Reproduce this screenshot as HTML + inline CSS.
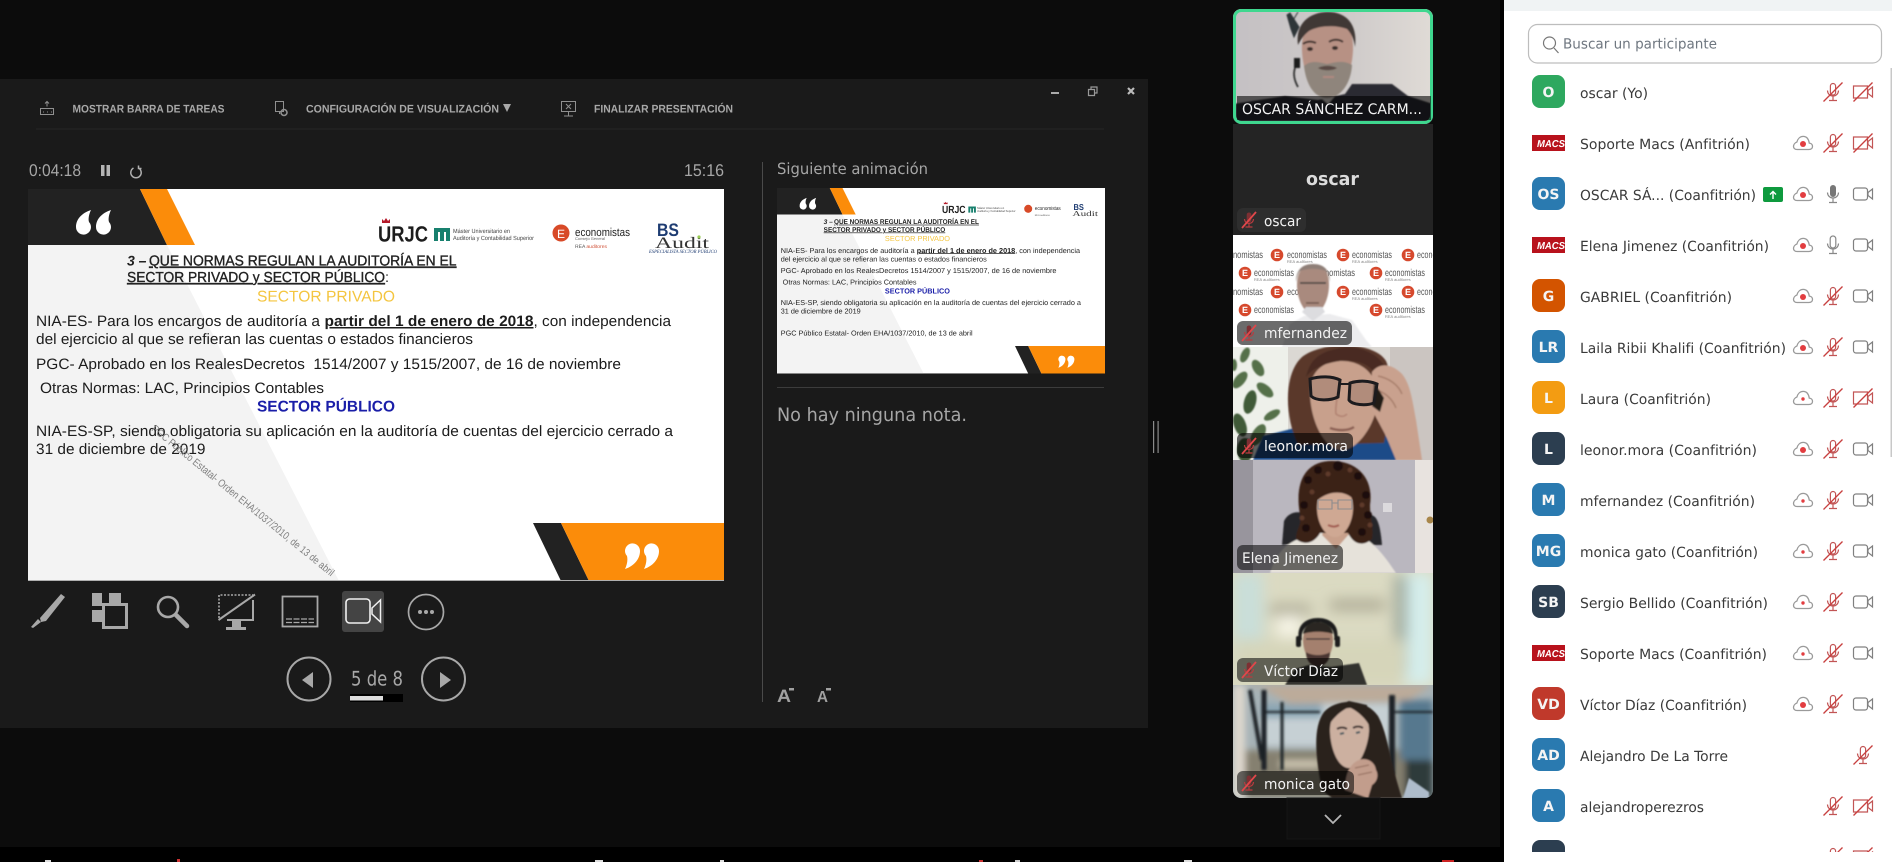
<!DOCTYPE html>
<html lang="es"><head><meta charset="utf-8"><title>Presentación</title>
<style>
html,body{margin:0;padding:0;background:#0c0c0c;width:1892px;height:862px;overflow:hidden}
svg{display:block}
text{font-family:"Liberation Sans",Arial,sans-serif;text-rendering:geometricPrecision}
.d{font-family:"DejaVu Sans","Liberation Sans",sans-serif}
.s{font-size:15px;fill:#1c1c1c}
.n{font-family:"DejaVu Sans","Liberation Sans",sans-serif;font-size:14px;fill:#3a3a3a}
.l{font-family:"DejaVu Sans","Liberation Sans",sans-serif;font-size:14.5px;fill:#f2f2f2}
.av{font-family:"DejaVu Sans","Liberation Sans",sans-serif;font-weight:bold;font-size:14px;fill:#f4f4f4;text-anchor:middle}
.t{font-weight:bold;font-size:11px;fill:#a8a8a8}
.e{font-size:10px;fill:#555}
.w{font-size:9px;fill:#fff;text-anchor:middle;font-weight:bold}
</style></head><body>
<svg width="1892" height="862" viewBox="0 0 1892 862" xmlns="http://www.w3.org/2000/svg">
<defs>
<filter id="b0" x="-20%" y="-20%" width="140%" height="140%"><feGaussianBlur stdDeviation=".7"/></filter>
<filter id="b1" x="-20%" y="-20%" width="140%" height="140%"><feGaussianBlur stdDeviation="1.4"/></filter>
<filter id="b3" x="-30%" y="-30%" width="160%" height="160%"><feGaussianBlur stdDeviation="3.5"/></filter>
<filter id="b7" x="-30%" y="-30%" width="160%" height="160%"><feGaussianBlur stdDeviation="7"/></filter>
<linearGradient id="g1" x1="0" x2="1" y1="0" y2="0"><stop offset="0" stop-color="#c4c0c3"/><stop offset=".6" stop-color="#cfcbca"/><stop offset="1" stop-color="#e0dbd6"/></linearGradient>
<clipPath id="c1"><rect x="1233" y="9" width="200" height="115" rx="8"/></clipPath>
<clipPath id="c3"><rect x="1233" y="235" width="200" height="112"/></clipPath>
<clipPath id="c4"><rect x="1233" y="347" width="200" height="113"/></clipPath>
<clipPath id="c5"><rect x="1233" y="460" width="200" height="113"/></clipPath>
<clipPath id="c6"><rect x="1233" y="573" width="200" height="112"/></clipPath>
<clipPath id="c7"><path d="M1233 685H1433V790a8 8 0 0 1-8 8H1241a8 8 0 0 1-8-8Z"/></clipPath>
<clipPath id="cp"><rect x="1504" y="0" width="388" height="852"/></clipPath>
<clipPath id="cs"><rect x="28" y="189" width="696" height="392"/></clipPath>
<g id="mic"><g fill="none" stroke="#c25555" stroke-width="1.2"><rect x="-2.6" y="-8.5" width="5.2" height="11.5" rx="2.6"/><path d="M-5.5-1.5a5.5 5.5 0 0 0 11 0M0 4v4.5M-4 8.5h8"/></g><path d="M-9.5 9.5L9.5-9.5" stroke="#c8403f" stroke-width="1.3"/></g>
<g id="micg"><g fill="none" stroke="#888" stroke-width="1.2"><path d="M-5.5-1.5a5.5 5.5 0 0 0 11 0M0 4v4.5M-4 8.5h8"/></g><rect x="-3" y="-9" width="6" height="12" rx="3" fill="#777"/></g>
<g id="mico" fill="none" stroke="#888" stroke-width="1.2"><rect x="-2.8" y="-9" width="5.6" height="12" rx="2.8"/><path d="M-5.5-1.5a5.5 5.5 0 0 0 11 0M0 4v4.5M-4 8.5h8"/></g>
<g id="cam" fill="none" stroke="#808080" stroke-width="1.2"><rect x="-9.5" y="-6" width="14" height="12" rx="2.5"/><path d="M5-1.5L9.5-5V5L5 1.5Z"/></g>
<g id="camx" fill="none" stroke="#c25555" stroke-width="1.2"><path d="M-7-6H4.5V6H-9.5V-6Z"/><path d="M5-1.5L9.5-5V5L5 1.5Z"/><path d="M-9.5 9.5L9.5-9.5" stroke="#c8403f" stroke-width="1.3"/></g>
<g id="cl"><path d="M-6 6.5H6c2.4 0 3.5-1.5 3.5-3.1 0-1.9-1.4-3.2-3.2-3.3C5.5-4.5 3.2-6.6.2-6.6c-3 0-5.4 2.2-6.3 5.6C-8.1-.2-9.5 1.7-9.5 3.4-9.5 5-8.3 6.5-6 6.5Z" fill="#fff" stroke="#9a9a9a" stroke-width="1.3"/></g>
<g id="mut"><rect x="-2.3" y="-7.5" width="4.6" height="10" rx="2.3" fill="#7d2f33"/><path d="M-4.5-1a4.5 4.5 0 0 0 9 0M0 3.5v3.5M-3.5 7h7" fill="none" stroke="#b83b3f" stroke-width="1.2"/><path d="M-7 8L7-8" stroke="#e0474a" stroke-width="1.8"/></g>
</defs>

<rect width="1892" height="862" fill="#0c0c0c"/>
<rect y="847" width="1504" height="15" fill="#000"/>
<rect x="1500" width="4" height="862" fill="#000"/>
<g><rect x="45" y="860" width="6" height="2" fill="#ddd"/><rect x="177" y="859" width="3" height="3" fill="#c33"/><rect x="595" y="860" width="8" height="2" fill="#ddd"/><rect x="720" y="860" width="4" height="2" fill="#ddd"/><rect x="979" y="860" width="4" height="2" fill="#c33"/><rect x="1015" y="860" width="5" height="2" fill="#ccc"/><rect x="1184" y="860" width="8" height="2" fill="#ddd"/><rect x="1442" y="860" width="12" height="2" fill="#c22"/></g>

<rect x="0" y="79" width="1148" height="649" fill="#1a1a1a"/>
<rect x="36" y="128.5" width="1068" height="1" fill="#272727"/>

<g stroke="#909090" fill="none" stroke-width="1">
<path d="M40.5 108.5h13v6h-13zM47 101.5v5M45 103.5l2-2 2 2"/>
<path d="M43 112h1M47 112h1M51 112h1"/>
<path d="M275.5 101.5h8v10h-8zM279.5 111v3"/><circle cx="284" cy="112.5" r="3" stroke-width="1.6"/>
<path d="M561.5 101.5h14v10h-14zM568.5 111.5v4M564 116h9M566 104l5 5M571 104l-5 5"/>
</g>
<text class="t" x="72.5" y="112.5" textLength="152" lengthAdjust="spacingAndGlyphs">MOSTRAR BARRA DE TAREAS</text>
<text class="t" x="306" y="112.5" textLength="193" lengthAdjust="spacingAndGlyphs">CONFIGURACIÓN DE VISUALIZACIÓN</text>
<path d="M503 104h8l-4 8Z" fill="#a8a8a8"/>
<text class="t" x="594" y="112.5" textLength="139" lengthAdjust="spacingAndGlyphs">FINALIZAR PRESENTACIÓN</text>

<rect x="1051" y="92" width="8" height="2" fill="#aaa"/>
<path d="M1088.5 89.5h6v6h-6zM1091 89v-2h6v6h-2" fill="none" stroke="#999" stroke-width="1.2"/>
<path d="M1128 88l6 6M1134 88l-6 6" stroke="#bbb" stroke-width="2.2"/>

<text x="29" y="176" font-size="17" fill="#a6a6a6" textLength="52" lengthAdjust="spacingAndGlyphs">0:04:18</text>
<rect x="101" y="165" width="3.5" height="11" fill="#b5b5b5"/><rect x="106.5" y="165" width="3.5" height="11" fill="#b5b5b5"/>
<path d="M133.5 168a5.2 5.2 0 1 0 5 0M138.5 165.5v3h3" fill="none" stroke="#b0b0b0" stroke-width="1.5"/>
<text x="684" y="176" font-size="17" fill="#a6a6a6" textLength="40" lengthAdjust="spacingAndGlyphs">15:16</text>

<!-- main slide -->
<g clip-path="url(#cs)">
<rect x="28" y="189" width="696" height="392" fill="#fff"/>
<path d="M28 245H167L339 581H28Z" fill="#f3f3f3"/>
<path d="M28 189H140L167 245H28Z" fill="#222"/>
<path d="M140 189H167L195 245H167Z" fill="#fb8c0a"/>
<path d="M533 523H561L589 581H561Z" fill="#222"/>
<path d="M561 523H724V581H589Z" fill="#fb8c0a"/>
<path d="M91 210C82 213 76 219 76 227a7.5 7.5 0 1 0 13-5c-1-3 0-8 2-12ZM111 210C102 213 96 219 96 227a7.5 7.5 0 1 0 13-5c-1-3 0-8 2-12Z" fill="#fff"/>
<path d="M625 569C634 566 640 559 640 551a7.5 7.5 0 1 0-13 5c1 4 0 9-2 13ZM644 569C653 566 659 559 659 551a7.5 7.5 0 1 0-13 5c1 4 0 9-2 13Z" fill="#fff"/>

<path d="M382 223v-4l2 2 2-3 2 3 2-2v4Z" fill="#b51a2a"/>
<text x="378" y="241.5" font-size="22" font-weight="bold" fill="#1d1d1d" textLength="50" lengthAdjust="spacingAndGlyphs">URJC</text>
<path d="M434 228h16v13h-4v-9h-2v9h-4v-9h-2v9h-4Z" fill="#18806e"/>
<text x="453" y="233" font-size="6" fill="#444" textLength="57" lengthAdjust="spacingAndGlyphs">Máster Universitario en</text>
<text x="453" y="240" font-size="6" fill="#444" textLength="81" lengthAdjust="spacingAndGlyphs">Auditoría y Contabilidad Superior</text>
<circle cx="561" cy="233" r="8.5" fill="#d84a28"/>
<text x="561" y="238" font-size="12" fill="#fff" text-anchor="middle">E</text>
<text x="575" y="236" font-size="11.5" fill="#222" textLength="55" lengthAdjust="spacingAndGlyphs">economistas</text>
<text x="575" y="240" font-size="4" fill="#666" textLength="30" lengthAdjust="spacingAndGlyphs">Consejo General</text>
<text x="575" y="248" font-size="5" fill="#555">REA <tspan fill="#d0533a">auditores</tspan></text>
<text x="657" y="236" font-size="18" font-weight="bold" fill="#1e3c72" textLength="22" lengthAdjust="spacingAndGlyphs">BS</text>
<text x="655" y="248" font-size="16" fill="#333" style="font-family:'Liberation Serif',serif" textLength="54" lengthAdjust="spacingAndGlyphs">Audit</text>
<circle cx="699" cy="237" r="1.6" fill="#9c5"/>
<text x="649" y="253" font-size="5" font-style="italic" fill="#1e3c72" style="font-family:'Liberation Serif',serif" textLength="68" lengthAdjust="spacingAndGlyphs">ESPECIALISTA SECTOR PÚBLICO</text>

<text x="127" y="265.5" font-size="14" font-weight="bold" font-style="italic" fill="#222">3 –</text>
<text x="149" y="265.5" font-size="14.5" fill="#222" text-decoration="underline" textLength="307.5" lengthAdjust="spacingAndGlyphs" style="stroke:#222;stroke-width:.35">QUE NORMAS REGULAN LA AUDITORÍA EN EL</text>
<text x="127" y="282" font-size="14.5" fill="#222" text-decoration="underline" textLength="258" lengthAdjust="spacingAndGlyphs" style="stroke:#222;stroke-width:.35">SECTOR PRIVADO y SECTOR PÚBLICO</text>
<text x="385" y="282" font-size="14.5" fill="#222">:</text>
<text x="257" y="301.5" font-size="15.5" fill="#f4c53f" textLength="138" lengthAdjust="spacingAndGlyphs">SECTOR PRIVADO</text>
<text class="s" x="36" y="326" textLength="284" lengthAdjust="spacingAndGlyphs">NIA-ES- Para los encargos de auditoría a</text>
<text class="s" x="324.5" y="326" font-weight="bold" text-decoration="underline" textLength="209" lengthAdjust="spacingAndGlyphs">partir del 1 de enero de 2018</text>
<text class="s" x="533.5" y="326" textLength="137.5" lengthAdjust="spacingAndGlyphs">, con independencia</text>
<text class="s" x="36" y="344" textLength="437" lengthAdjust="spacingAndGlyphs">del ejercicio al que se refieran las cuentas o estados financieros</text>
<text class="s" x="36" y="369" textLength="585" lengthAdjust="spacingAndGlyphs" xml:space="preserve">PGC- Aprobado en los RealesDecretos  1514/2007 y 1515/2007, de 16 de noviembre</text>
<text class="s" x="40" y="393" textLength="284" lengthAdjust="spacingAndGlyphs">Otras Normas: LAC, Principios Contables</text>
<text x="257" y="411.5" font-size="15.5" font-weight="bold" fill="#1a1ea8" textLength="138" lengthAdjust="spacingAndGlyphs">SECTOR PÚBLICO</text>
<text class="s" x="36" y="436" textLength="637" lengthAdjust="spacingAndGlyphs">NIA-ES-SP, siendo obligatoria su aplicación en la auditoría de cuentas del ejercicio cerrado a</text>
<text class="s" x="36" y="454" textLength="169.5" lengthAdjust="spacingAndGlyphs">31 de diciembre de 2019</text>
<text transform="translate(151,430) rotate(39.2)" font-size="10.5" fill="#808080" textLength="232" lengthAdjust="spacingAndGlyphs">PGC Público Estatal- Orden EHA/1037/2010, de 13 de abril</text>
</g>
<rect x="28" y="580" width="696" height="1" fill="#b0b0b0"/>

<!-- bottom tool icons -->
<g fill="#a8a8a8" stroke="none">
<path d="M61 594l4 3-19 24-5 1-1-4Z"/><path d="M38 619l3 3-8 6-2-1Z"/>
<rect x="92" y="593" width="10" height="13"/><rect x="109" y="593" width="12" height="10"/><rect x="92" y="610" width="10" height="12"/>
</g>
<rect x="103.5" y="604.5" width="23" height="23" fill="none" stroke="#a8a8a8" stroke-width="3"/>
<circle cx="168" cy="607" r="10" fill="none" stroke="#a8a8a8" stroke-width="2.6"/>
<path d="M176 615l11 11" stroke="#a8a8a8" stroke-width="4.5" stroke-linecap="round"/>
<path d="M219 618v-23h34" fill="none" stroke="#a8a8a8" stroke-width="1.6" stroke-dasharray="2 1.5"/>
<path d="M218.5 620L255 594.5M253 600v20h-26" fill="none" stroke="#a8a8a8" stroke-width="2"/>
<rect x="232" y="620" width="9" height="7" fill="#a8a8a8"/>
<rect x="226" y="627" width="20" height="3" fill="#a8a8a8"/>
<rect x="282.5" y="596.5" width="35" height="30" fill="none" stroke="#a8a8a8" stroke-width="1.8"/>
<path d="M286 619h28M286 622.5h28" stroke="#a8a8a8" stroke-width="1.2" stroke-dasharray="6 1.5"/>
<rect x="342" y="591" width="42" height="41" rx="3" fill="#444"/>
<rect x="346" y="599" width="24" height="24" rx="3.5" fill="#444" stroke="#f0f0f0" stroke-width="1.6"/>
<path d="M372 608L380.5 600V622L372 614Z" fill="#444" stroke="#f0f0f0" stroke-width="1.5"/>
<circle cx="426" cy="612" r="17.5" fill="none" stroke="#a8a8a8" stroke-width="1.7"/>
<circle cx="420" cy="612" r="2" fill="#a8a8a8"/><circle cx="426" cy="612" r="2" fill="#a8a8a8"/><circle cx="432" cy="612" r="2" fill="#a8a8a8"/>
<circle cx="309" cy="679" r="21.5" fill="none" stroke="#a8a8a8" stroke-width="2"/>
<path d="M302 680l11-8v16Z" fill="#a8a8a8"/>
<circle cx="443.5" cy="679" r="21.5" fill="none" stroke="#a8a8a8" stroke-width="2"/>
<path d="M451 680l-11-8v16Z" fill="#a8a8a8"/>
<text x="351" y="685.5" font-size="20" fill="#a8a8a8" class="d" textLength="52" lengthAdjust="spacingAndGlyphs">5 de 8</text>
<rect x="350" y="694" width="53" height="8" fill="#000"/><rect x="350" y="696" width="33" height="4.5" fill="#ddd"/>

<rect x="762" y="162" width="1" height="540" fill="#4a4a4a"/>
<text class="d" x="777" y="174" font-size="15.5" fill="#a6a6a6" textLength="151" lengthAdjust="spacingAndGlyphs">Siguiente animación</text>

<!-- next slide thumbnail -->
<g transform="translate(777,188) scale(.4713,.4731) translate(-28,-189)">
<g clip-path="url(#cs)">
<rect x="28" y="189" width="696" height="392" fill="#fff"/>
<path d="M28 245H167L339 581H28Z" fill="#f3f3f3"/>
<path d="M28 189H140L167 245H28Z" fill="#222"/>
<path d="M140 189H167L195 245H167Z" fill="#fb8c0a"/>
<path d="M533 523H561L589 581H561Z" fill="#222"/>
<path d="M561 523H724V581H589Z" fill="#fb8c0a"/>
<path d="M91 210C82 213 76 219 76 227a7.5 7.5 0 1 0 13-5c-1-3 0-8 2-12ZM111 210C102 213 96 219 96 227a7.5 7.5 0 1 0 13-5c-1-3 0-8 2-12Z" fill="#fff"/>
<path d="M625 569C634 566 640 559 640 551a7.5 7.5 0 1 0-13 5c1 4 0 9-2 13ZM644 569C653 566 659 559 659 551a7.5 7.5 0 1 0-13 5c1 4 0 9-2 13Z" fill="#fff"/>
<path d="M382 223v-4l2 2 2-3 2 3 2-2v4Z" fill="#b51a2a"/>
<text x="378" y="241.5" font-size="22" font-weight="bold" fill="#1d1d1d" textLength="50" lengthAdjust="spacingAndGlyphs">URJC</text>
<path d="M434 228h16v13h-4v-9h-2v9h-4v-9h-2v9h-4Z" fill="#18806e"/>
<text x="453" y="233" font-size="6" fill="#444" textLength="57" lengthAdjust="spacingAndGlyphs">Máster Universitario en</text>
<text x="453" y="240" font-size="6" fill="#444" textLength="81" lengthAdjust="spacingAndGlyphs">Auditoría y Contabilidad Superior</text>
<circle cx="561" cy="233" r="8.5" fill="#d84a28"/>
<text x="575" y="236" font-size="11.5" fill="#222" textLength="55" lengthAdjust="spacingAndGlyphs">economistas</text>
<text x="575" y="248" font-size="5" fill="#555">REA auditores</text>
<text x="657" y="236" font-size="18" font-weight="bold" fill="#1e3c72" textLength="22" lengthAdjust="spacingAndGlyphs">BS</text>
<text x="655" y="248" font-size="16" fill="#333" style="font-family:'Liberation Serif',serif" textLength="54" lengthAdjust="spacingAndGlyphs">Audit</text>
<text x="127" y="265.5" font-size="14" font-weight="bold" font-style="italic" fill="#222">3 –</text>
<text x="149" y="265.5" font-size="14.5" fill="#222" text-decoration="underline" font-weight="bold" textLength="307.5" lengthAdjust="spacingAndGlyphs">QUE NORMAS REGULAN LA AUDITORÍA EN EL</text>
<text x="127" y="282" font-size="14.5" fill="#222" font-weight="bold" text-decoration="underline" textLength="258" lengthAdjust="spacingAndGlyphs">SECTOR PRIVADO y SECTOR PÚBLICO</text>
<text x="257" y="301.5" font-size="15.5" fill="#f4c53f" textLength="138" lengthAdjust="spacingAndGlyphs">SECTOR PRIVADO</text>
<text class="s" x="36" y="326" textLength="284" lengthAdjust="spacingAndGlyphs">NIA-ES- Para los encargos de auditoría a</text>
<text class="s" x="324.5" y="326" font-weight="bold" text-decoration="underline" textLength="209" lengthAdjust="spacingAndGlyphs">partir del 1 de enero de 2018</text>
<text class="s" x="533.5" y="326" textLength="137.5" lengthAdjust="spacingAndGlyphs">, con independencia</text>
<text class="s" x="36" y="344" textLength="437" lengthAdjust="spacingAndGlyphs">del ejercicio al que se refieran las cuentas o estados financieros</text>
<text class="s" x="36" y="369" textLength="585" lengthAdjust="spacingAndGlyphs">PGC- Aprobado en los RealesDecretos 1514/2007 y 1515/2007, de 16 de noviembre</text>
<text class="s" x="40" y="393" textLength="284" lengthAdjust="spacingAndGlyphs">Otras Normas: LAC, Principios Contables</text>
<text x="257" y="411.5" font-size="15.5" font-weight="bold" fill="#1a1ea8" textLength="138" lengthAdjust="spacingAndGlyphs">SECTOR PÚBLICO</text>
<text class="s" x="36" y="436" textLength="637" lengthAdjust="spacingAndGlyphs">NIA-ES-SP, siendo obligatoria su aplicación en la auditoría de cuentas del ejercicio cerrado a</text>
<text class="s" x="36" y="454" textLength="169.5" lengthAdjust="spacingAndGlyphs">31 de diciembre de 2019</text>
<text class="s" x="36" y="501" textLength="407" lengthAdjust="spacingAndGlyphs">PGC Público Estatal- Orden EHA/1037/2010, de 13 de abril</text>
</g></g>

<rect x="777" y="387" width="327" height="1" fill="#3c3c3c"/>
<text class="d" x="777" y="421" font-size="18.5" fill="#a6a6a6" textLength="190" lengthAdjust="spacingAndGlyphs">No hay ninguna nota.</text>
<text x="777" y="702" font-size="18" font-weight="bold" fill="#a0a0a0" textLength="14" lengthAdjust="spacingAndGlyphs">A</text>
<rect x="789" y="688" width="5" height="2.5" fill="#a0a0a0"/>
<text x="817" y="702" font-size="16" font-weight="bold" fill="#a0a0a0" textLength="11" lengthAdjust="spacingAndGlyphs">A</text>
<rect x="826" y="688" width="5" height="2.5" fill="#a0a0a0"/>
<rect x="1153" y="421" width="1.2" height="32" fill="#8a8a8a"/><rect x="1157.5" y="421" width="1.2" height="32" fill="#8a8a8a"/>

<!-- VIDEO STRIP -->
<!-- Tile 1 -->
<g clip-path="url(#c1)">
<rect x="1233" y="9" width="200" height="115" fill="url(#g1)"/>
<g filter="url(#b0)">
<path d="M1233 104L1285 96 1318 100 1345 94 1352 84 1392 84 1408 96 1433 104V124H1233Z" fill="#2b2a30"/>
<path d="M1312 90l16 14 14-16-4-8h-20Z" fill="#d8d2cc"/>
<path d="M1302 50c-1-22 10-34 26-34 16 0 26 12 25 34-1 24-11 46-26 46-14 0-24-22-25-46Z" fill="#b79184"/>
<path d="M1304 66c7-6 14-4 23-2 9-2 17-4 25 1-1 18-11 33-25 33-13 0-21-14-23-32Z" fill="#8f857c"/>
<path d="M1318 68c5-3 14-3 19 0-4 3-15 3-19 0Z" fill="#5a4a44"/>
<path d="M1323 77h11" stroke="#b08a80" stroke-width="2"/>
<path d="M1298 45c-3-22 12-33 30-33s30 12 27 35c-1-8-4-14-8-18-10-4-28-4-38 2-5 4-8 8-11 14Z" fill="#3f3735"/>
<path d="M1303 44c4-3 9-3 13-1M1329 42c4-3 10-3 14 0" stroke="#3a2d2a" stroke-width="2" fill="none"/>
<ellipse cx="1310" cy="49" rx="3" ry="2" fill="#3a2d2a"/><ellipse cx="1335" cy="48" rx="3" ry="2" fill="#3a2d2a"/>
<path d="M1294 58h6v10h-6Z" fill="#1c1c1c"/>
<path d="M1295 68c-2 6-1 12 3 19" stroke="#333" stroke-width="1.8" fill="none"/>
<path d="M1290 13l9 14 -5 10-3-8-4-14Z M1298 12l-6 10" fill="#2e3538" stroke="#2e3538"/>
</g>
</g>
<rect x="1234.5" y="10.5" width="197" height="112" rx="7" fill="none" stroke="#3fd78f" stroke-width="3"/>
<rect x="1237" y="96" width="194" height="24" fill="#000" opacity=".58"/>
<text class="l" x="1242" y="114" textLength="180" lengthAdjust="spacingAndGlyphs">OSCAR SÁNCHEZ CARM...</text>

<!-- Oscar tile -->
<rect x="1233" y="124" width="200" height="111" fill="#242424"/>
<text class="d" x="1306" y="185" font-size="18" font-weight="bold" fill="#dcdcdc" textLength="53" lengthAdjust="spacingAndGlyphs">oscar</text>
<rect x="1237" y="208" width="69" height="24" rx="6" fill="#2e2e2e"/>
<use href="#mut" x="1249" y="220"/>
<text class="l" x="1264" y="226" textLength="37" lengthAdjust="spacingAndGlyphs">oscar</text>

<!-- mfernandez tile -->
<g clip-path="url(#c3)">
<rect x="1233" y="235" width="200" height="112" fill="#fff"/>
<g>
<text class="e" x="1233" y="258" textLength="30" lengthAdjust="spacingAndGlyphs">nomistas</text>
<circle cx="1277" cy="255" r="6.3" fill="#d6492d"/><text class="e" x="1287" y="258" textLength="40" lengthAdjust="spacingAndGlyphs">economistas</text><text class="w" x="1277" y="258">E</text>
<circle cx="1343" cy="255" r="6.3" fill="#d6492d"/><text class="e" x="1352" y="258" textLength="40" lengthAdjust="spacingAndGlyphs">economistas</text><text class="w" x="1343" y="258">E</text>
<circle cx="1408" cy="255" r="6.3" fill="#d6492d"/><text class="e" x="1417" y="258" textLength="40" lengthAdjust="spacingAndGlyphs">economistas</text><text class="w" x="1408" y="258">E</text>
<circle cx="1245" cy="273" r="6.3" fill="#d6492d"/><text class="e" x="1254" y="276" textLength="40" lengthAdjust="spacingAndGlyphs">economistas</text><text class="w" x="1245" y="276">E</text>
<text class="e" x="1325" y="276" textLength="30" lengthAdjust="spacingAndGlyphs">nomistas</text>
<circle cx="1376" cy="273" r="6.3" fill="#d6492d"/><text class="e" x="1385" y="276" textLength="40" lengthAdjust="spacingAndGlyphs">economistas</text><text class="w" x="1376" y="276">E</text>
<text class="e" x="1233" y="295" textLength="30" lengthAdjust="spacingAndGlyphs">nomistas</text>
<circle cx="1277" cy="292" r="6.3" fill="#d6492d"/><text class="e" x="1287" y="295" textLength="12" lengthAdjust="spacingAndGlyphs">eco</text><text class="w" x="1277" y="295">E</text>
<circle cx="1343" cy="292" r="6.3" fill="#d6492d"/><text class="e" x="1352" y="295" textLength="40" lengthAdjust="spacingAndGlyphs">economistas</text><text class="w" x="1343" y="295">E</text>
<circle cx="1408" cy="292" r="6.3" fill="#d6492d"/><text class="e" x="1417" y="295" textLength="40" lengthAdjust="spacingAndGlyphs">economistas</text><text class="w" x="1408" y="295">E</text>
<circle cx="1245" cy="310" r="6.3" fill="#d6492d"/><text class="e" x="1254" y="313" textLength="40" lengthAdjust="spacingAndGlyphs">economistas</text><text class="w" x="1245" y="313">E</text>
<circle cx="1376" cy="310" r="6.3" fill="#d6492d"/><text class="e" x="1385" y="313" textLength="40" lengthAdjust="spacingAndGlyphs">economistas</text><text class="w" x="1376" y="313">E</text>
<g font-size="4" fill="#888"><text x="1287" y="263">REA auditores</text><text x="1352" y="263">REA auditores</text><text x="1254" y="281">REA auditores</text><text x="1385" y="281">REA auditores</text><text x="1352" y="300">REA auditores</text><text x="1385" y="318">REA auditores</text></g>
</g>
<g filter="url(#b0)">
<path d="M1282 347L1290 324 1304 316 1330 314 1352 320 1366 340 1372 347Z" fill="#ececee"/>
<path d="M1297 285c0-14 6-20 16-20s16 6 16 20-7 29-16 29-16-15-16-29Z" fill="#a98a7e"/>
<path d="M1296 282c0-12 6-18 17-18 11 0 17 6 17 18-1-5-2-9-4-11-8-3-18-3-26 0-2 2-3 6-4 11Z" fill="#8f7f78"/>
<path d="M1300 283h10M1316 283h10M1310 283h6" stroke="#3a3a3a" stroke-width="1.5"/>
<path d="M1306 303h13" stroke="#6e544a" stroke-width="1.5"/>
<path d="M1302 312l11 9 12-9-3-5h-16Z" fill="#dcdcdf"/>
</g>
</g>
<rect x="1237" y="321" width="115" height="24" rx="6" fill="#000" opacity=".58"/>
<use href="#mut" x="1249" y="333"/>
<text class="l" x="1264" y="338" textLength="83" lengthAdjust="spacingAndGlyphs">mfernandez</text>

<!-- leonor tile -->
<g clip-path="url(#c4)">
<rect x="1233" y="347" width="200" height="113" fill="#dbd8d3"/>
<rect x="1233" y="347" width="55" height="113" fill="#eef0ea"/>
<rect x="1390" y="347" width="43" height="113" fill="#cbc5c1"/>
<g filter="url(#b0)" fill="#54704a">
<ellipse cx="1245" cy="355" rx="4" ry="8" transform="rotate(25 1245 355)"/><ellipse cx="1258" cy="368" rx="5" ry="9" transform="rotate(-30 1258 368)"/>
<ellipse cx="1240" cy="380" rx="5" ry="10" transform="rotate(40 1240 380)"/><ellipse cx="1265" cy="390" rx="5" ry="10" transform="rotate(-50 1265 390)"/>
<ellipse cx="1250" cy="402" rx="6" ry="12" transform="rotate(15 1250 402)" fill="#3f5a38"/><ellipse cx="1272" cy="415" rx="4" ry="9" transform="rotate(60 1272 415)"/>
<ellipse cx="1240" cy="425" rx="6" ry="12" transform="rotate(-20 1240 425)" fill="#3f5a38"/><ellipse cx="1258" cy="435" rx="6" ry="12" transform="rotate(30 1258 435)"/>
<ellipse cx="1245" cy="450" rx="8" ry="12" fill="#3f5a38"/>
<ellipse cx="1234" cy="365" rx="3" ry="6"/>
</g>
<g filter="url(#b0)">
<path d="M1253 460l10-24 40-10 44 14 36-8 20 28Z" fill="#1d4c88"/>
<path d="M1298 445c-14-30-14-72 4-88 20-16 72-16 84 4 8 18 4 50-2 82Z" fill="#5a382b"/>
<path d="M1310 392c0-16 8-30 30-31 22-1 38 14 38 36s-18 53-36 53-32-30-32-58Z" fill="#c8a08c"/>
<path d="M1340 361c22-2 36 6 42 26l2-22c-12-18-36-20-48-16-12 2-26 8-30 28 8-10 20-14 34-16Z" fill="#4a2c22"/>
<path d="M1330 428c8 3 18 3 24-1" stroke="#8b5f52" stroke-width="2.5" fill="none"/>
<path d="M1338 392c-1 8-3 16-2 22 4 3 8 3 11 0" stroke="#b08070" stroke-width="1.5" fill="none"/>
<path d="M1372 372c8-10 20-8 30 2 8 10 10 24 14 46l6 40h-26l-10-24-16-30Z" fill="#c9a18e"/>
<path d="M1378 376c10 2 20 8 24 18M1376 390c8 2 16 8 20 18" stroke="#a87f6c" stroke-width="1.5" fill="none"/>
<path d="M1374 382l10 16-4 14-8-6Z" fill="#201a18"/>
</g>
<path d="M1310 379c10-3 22-3 30 1l-2 17c-8 4-22 4-27-1ZM1350 383c10-3 20-2 27 1l-3 19c-8 3-22 2-25-3Z" fill="#6a5048" fill-opacity=".25" stroke="#1c1b1e" stroke-width="3"/>
<path d="M1340 384h10" stroke="#1c1b1e" stroke-width="2"/>
</g>
<rect x="1237" y="433" width="116" height="25" rx="6" fill="#000" opacity=".6"/>
<use href="#mut" x="1249" y="446"/>
<text class="l" x="1264" y="451" textLength="84" lengthAdjust="spacingAndGlyphs">leonor.mora</text>

<!-- Elena tile -->
<g clip-path="url(#c5)">
<rect x="1233" y="460" width="200" height="113" fill="#bab7bf"/>
<rect x="1233" y="460" width="20" height="113" fill="#98959d"/>
<rect x="1415" y="460" width="18" height="113" fill="#e8e3df"/>
<rect x="1383" y="503" width="9" height="9" fill="#dcdadd"/>
<circle cx="1430" cy="520" r="3.5" fill="#a8864a"/>
<g filter="url(#b0)">
<path d="M1282 545l2-24c4-8 12-10 18-8l4 30Z" fill="#27272a"/>
<path d="M1370 515c6 0 10 6 12 30h-14Z" fill="#27272a"/>
<path d="M1270 573c6-18 14-30 34-36l14-8 22 8 14-4c18 6 30 22 42 40Z" fill="#e6e2da"/>
<path d="M1322 535l14 14 14-16-6-8h-18Z" fill="#c8a08b"/>
<path d="M1300 515c-6-34 6-54 32-54 26 0 42 18 38 44 0 14 4 22 2 34-12 10-20 2-24-6l-28 0c-4 8-14 14-24 6 0-10 6-14 4-24Z" fill="#3a2018"/>
<g fill="#1f100c"><circle cx="1308" cy="480" r="4"/><circle cx="1318" cy="470" r="4"/><circle cx="1338" cy="466" r="5"/><circle cx="1358" cy="476" r="4"/><circle cx="1366" cy="495" r="4"/><circle cx="1368" cy="515" r="4"/><circle cx="1304" cy="505" r="4"/><circle cx="1306" cy="528" r="4"/><circle cx="1362" cy="532" r="4"/></g>
<g fill="#5e3a2c"><circle cx="1312" cy="492" r="2.5"/><circle cx="1328" cy="474" r="2.5"/><circle cx="1350" cy="470" r="2.5"/><circle cx="1362" cy="505" r="2.5"/><circle cx="1302" cy="518" r="2.5"/><circle cx="1370" cy="525" r="2.5"/></g>
<path d="M1317 508c0-15 7-24 18-24s18 10 18 24-8 29-18 29-18-14-18-29Z" fill="#cfa893"/>
<path d="M1316 502c8-10 28-14 38-2 0-12-8-20-19-20s-20 8-19 22Z" fill="#3a2018"/>
<path d="M1328 525c4 2 8 2 11 0" stroke="#a0584e" stroke-width="2" fill="none"/>
</g>
<path d="M1318 500h14v9h-14zM1338 500h14v9h-14zM1332 503h6" fill="none" stroke="#8d8c8e" stroke-width="1.1"/>
</g>
<rect x="1237" y="545" width="106" height="25" rx="6" fill="#000" opacity=".55"/>
<text class="l" x="1242" y="563" textLength="96" lengthAdjust="spacingAndGlyphs">Elena Jimenez</text>

<!-- Victor tile -->
<g clip-path="url(#c6)">
<rect x="1233" y="573" width="200" height="112" fill="#dbdac2"/>
<g filter="url(#b7)">
<rect x="1233" y="573" width="30" height="112" fill="#c9ded9"/>
<rect x="1400" y="573" width="33" height="112" fill="#d5eeec"/>
<rect x="1395" y="575" width="12" height="100" fill="#9aa497"/>
<rect x="1270" y="605" width="40" height="10" fill="#a9a690"/>
<rect x="1330" y="600" width="55" height="10" fill="#a9a690"/>
<rect x="1277" y="615" width="24" height="22" fill="#f6f4e6"/>
<rect x="1235" y="640" width="170" height="45" fill="#d6d5ba"/>
</g>
<g filter="url(#b0)">
<path d="M1285 685l10-16 14-4 22 2 28-4 8 22Z" fill="#33302f"/>
<path d="M1303 640c0-11 7-17 15-17s15 6 15 17-6 24-15 24-15-13-15-24Z" fill="#a4806e"/>
<path d="M1303 634c2-9 7-12 15-12s14 4 15 12c-8-3-22-3-30 0Z" fill="#2a2524"/>
<path d="M1299 640c-3-14 6-22 19-22s22 8 19 22h-3c2-10-6-18-16-18s-18 8-16 18Z" fill="#1e1e1e"/>
<rect x="1296" y="636" width="5" height="11" rx="2" fill="#1e1e1e"/><rect x="1335" y="636" width="5" height="11" rx="2" fill="#1e1e1e"/>
<path d="M1306 652c6 4 18 4 24 0 0 9-5 14-12 14s-12-5-12-14Z" fill="#4a3630"/>
<path d="M1306 639h9M1321 639h9M1315 639h6" stroke="#2c2c2c" stroke-width="1.3"/>
</g>
</g>
<rect x="1237" y="658" width="106" height="24" rx="6" fill="#000" opacity=".55"/>
<use href="#mut" x="1249" y="670"/>
<text class="l" x="1264" y="676" textLength="74" lengthAdjust="spacingAndGlyphs">Víctor Díaz</text>

<!-- monica tile -->
<g clip-path="url(#c7)">
<rect x="1233" y="685" width="200" height="113" fill="#a6b2b6"/>
<g filter="url(#b3)">
<path d="M1233 685H1433L1405 702 1290 704 1262 688Z" fill="#bcab9a"/>
<rect x="1262" y="704" width="130" height="42" fill="#c6d0d4"/>
<rect x="1262" y="704" width="60" height="14" fill="#8ba5b4"/>
<rect x="1233" y="750" width="200" height="48" fill="#858070"/>
<rect x="1233" y="685" width="12" height="113" fill="#ded8ce"/>
<rect x="1400" y="700" width="33" height="60" fill="#57788e"/>
<rect x="1405" y="760" width="28" height="38" fill="#2f3a3a"/>
<rect x="1280" y="760" width="40" height="8" fill="#c9c2ae"/>
</g>
<g stroke="#1c2026" fill="none" filter="url(#b1)"><path d="M1250 690L1262 760" stroke-width="4"/><path d="M1264 690L1264 770" stroke-width="5"/><path d="M1282 702V770" stroke-width="3"/><path d="M1392 695V775" stroke-width="6"/><path d="M1262 712H1320M1390 712H1433" stroke-width="2"/></g>
<g filter="url(#b0)">
<path d="M1403 798l6-20 20 14v6Z" fill="#aebccb"/>
<path d="M1322 790c-6-30-10-62 2-78 12-14 42-14 54 4 10 18 12 46 24 82h-70Z" fill="#2c211d"/>
<path d="M1330 730c0-14 8-22 20-22s19 10 19 22-8 38-20 38-19-22-19-38Z" fill="#ccb0a0"/>
<path d="M1331 722c6-8 12-12 18-15 6 3 14 8 20 18l-2-20-18-4-16 6Z" fill="#2c211d"/>
<path d="M1337 729c3-2 7-2 10 0M1353 728c3-2 7-2 10 0" stroke="#3d3230" stroke-width="2" fill="none"/>
<path d="M1340 734l4-1M1356 733l4-1" stroke="#4a5a60" stroke-width="2"/>
<path d="M1345 790c0-14 4-26 14-30 8-3 16 2 17 10 3 5 1 12-4 15l-4 13Z" fill="#c29d8c"/>
<path d="M1355 768l14-3M1358 775l14-3" stroke="#9a7565" stroke-width="1.2"/>
</g>
</g>
<rect x="1237" y="771" width="117" height="24" rx="6" fill="#000" opacity=".55"/>
<use href="#mut" x="1249" y="783"/>
<text class="l" x="1264" y="789" textLength="86" lengthAdjust="spacingAndGlyphs">monica gato</text>

<rect x="1287" y="798" width="93" height="41" fill="#0f0f0f" stroke="#151515"/>
<path d="M1325 815l8 8 8-8" fill="none" stroke="#b5b5b5" stroke-width="1.8"/>

<!-- PARTICIPANTS -->
<rect x="1504" y="0" width="388" height="862" fill="#fff"/>
<rect x="1504" y="0" width="388" height="11" fill="#f0f3f4"/>
<rect x="1528.5" y="24.5" width="353" height="38.5" rx="9" fill="#fff" stroke="#bdbdbd" stroke-width="1.2"/>
<circle cx="1549.5" cy="43" r="6" fill="none" stroke="#777" stroke-width="1.2"/><path d="M1554 48l4.5 5" stroke="#777" stroke-width="1.2"/>
<text class="d" x="1563" y="48.5" font-size="14" fill="#6f7780" textLength="154" lengthAdjust="spacingAndGlyphs">Buscar un participante</text>
<rect x="1890.5" y="68" width="1.5" height="389" fill="#c8c8c8"/>

<g clip-path="url(#cp)">
<rect x="1532" y="75" width="33" height="33" rx="8" fill="#2ea85f"/><text class="av" x="1548.5" y="97">O</text>
<rect x="1532" y="135" width="33" height="16" fill="#b8121c"/><text x="1537" y="147" font-size="10" font-weight="bold" font-style="italic" fill="#fff" textLength="28" lengthAdjust="spacingAndGlyphs">MACS</text>
<rect x="1532" y="177" width="33" height="33" rx="8" fill="#2a7ab0"/><text class="av" x="1548.5" y="199">OS</text>
<rect x="1532" y="237" width="33" height="16" fill="#b8121c"/><text x="1537" y="249" font-size="10" font-weight="bold" font-style="italic" fill="#fff" textLength="28" lengthAdjust="spacingAndGlyphs">MACS</text>
<rect x="1532" y="279" width="33" height="33" rx="8" fill="#d35400"/><text class="av" x="1548.5" y="301">G</text>
<rect x="1532" y="330" width="33" height="33" rx="8" fill="#2a7ab0"/><text class="av" x="1548.5" y="352">LR</text>
<rect x="1532" y="381" width="33" height="33" rx="8" fill="#f39c12"/><text class="av" x="1548.5" y="403">L</text>
<rect x="1532" y="432" width="33" height="33" rx="8" fill="#2c3e50"/><text class="av" x="1548.5" y="454">L</text>
<rect x="1532" y="483" width="33" height="33" rx="8" fill="#2a7ab0"/><text class="av" x="1548.5" y="505">M</text>
<rect x="1532" y="534" width="33" height="33" rx="8" fill="#2a7ab0"/><text class="av" x="1548.5" y="556">MG</text>
<rect x="1532" y="585" width="33" height="33" rx="8" fill="#2c3e50"/><text class="av" x="1548.5" y="607">SB</text>
<rect x="1532" y="645" width="33" height="16" fill="#b8121c"/><text x="1537" y="657" font-size="10" font-weight="bold" font-style="italic" fill="#fff" textLength="28" lengthAdjust="spacingAndGlyphs">MACS</text>
<rect x="1532" y="687" width="33" height="33" rx="8" fill="#c0392b"/><text class="av" x="1548.5" y="709">VD</text>
<rect x="1532" y="738" width="33" height="33" rx="8" fill="#2a7ab0"/><text class="av" x="1548.5" y="760">AD</text>
<rect x="1532" y="789" width="33" height="33" rx="8" fill="#2a7ab0"/><text class="av" x="1548.5" y="811">A</text>
<rect x="1532" y="840" width="33" height="33" rx="8" fill="#2c3e50"/>

<text class="n" x="1580" y="98" textLength="68" lengthAdjust="spacingAndGlyphs">oscar (Yo)</text>
<text class="n" x="1580" y="149" textLength="170" lengthAdjust="spacingAndGlyphs">Soporte Macs (Anfitrión)</text>
<text class="n" x="1580" y="200" textLength="176" lengthAdjust="spacingAndGlyphs">OSCAR SÁ... (Coanfitrión)</text>
<text class="n" x="1580" y="251" textLength="189" lengthAdjust="spacingAndGlyphs">Elena Jimenez (Coanfitrión)</text>
<text class="n" x="1580" y="302" textLength="152" lengthAdjust="spacingAndGlyphs">GABRIEL (Coanfitrión)</text>
<text class="n" x="1580" y="353" textLength="206" lengthAdjust="spacingAndGlyphs">Laila Ribii Khalifi (Coanfitrión)</text>
<text class="n" x="1580" y="404" textLength="131" lengthAdjust="spacingAndGlyphs">Laura (Coanfitrión)</text>
<text class="n" x="1580" y="455" textLength="177" lengthAdjust="spacingAndGlyphs">leonor.mora (Coanfitrión)</text>
<text class="n" x="1580" y="506" textLength="175" lengthAdjust="spacingAndGlyphs">mfernandez (Coanfitrión)</text>
<text class="n" x="1580" y="557" textLength="178" lengthAdjust="spacingAndGlyphs">monica gato (Coanfitrión)</text>
<text class="n" x="1580" y="608" textLength="188" lengthAdjust="spacingAndGlyphs">Sergio Bellido (Coanfitrión)</text>
<text class="n" x="1580" y="659" textLength="187" lengthAdjust="spacingAndGlyphs">Soporte Macs (Coanfitrión)</text>
<text class="n" x="1580" y="710" textLength="167" lengthAdjust="spacingAndGlyphs">Víctor Díaz (Coanfitrión)</text>
<text class="n" x="1580" y="761" textLength="148" lengthAdjust="spacingAndGlyphs">Alejandro De La Torre</text>
<text class="n" x="1580" y="812" textLength="124" lengthAdjust="spacingAndGlyphs">alejandroperezros</text>

<rect x="1763" y="187" width="20" height="15" rx="2" fill="#0e9a3e"/>
<path d="M1773 199v-7M1770 194.5l3-3 3 3" fill="none" stroke="#fff" stroke-width="1.4"/>

<g fill="#e23d40">
<use href="#cl" x="1803" y="143"/><circle cx="1803" cy="144" r="3"/>
<use href="#cl" x="1803" y="194"/><circle cx="1803" cy="195" r="3"/>
<use href="#cl" x="1803" y="245"/><circle cx="1803" cy="246" r="3"/>
<use href="#cl" x="1803" y="296"/><circle cx="1803" cy="297" r="3"/>
<use href="#cl" x="1803" y="347"/><circle cx="1803" cy="348" r="3"/>
<use href="#cl" x="1803" y="398"/><circle cx="1803" cy="399" r="1.7"/>
<use href="#cl" x="1803" y="449"/><circle cx="1803" cy="450" r="3"/>
<use href="#cl" x="1803" y="500"/><circle cx="1803" cy="501" r="1.7"/>
<use href="#cl" x="1803" y="551"/><circle cx="1803" cy="552" r="1.7"/>
<use href="#cl" x="1803" y="602"/><circle cx="1803" cy="603" r="1.7"/>
<use href="#cl" x="1803" y="653"/><circle cx="1803" cy="654" r="1.7"/>
<use href="#cl" x="1803" y="704"/><circle cx="1803" cy="705" r="3"/>
</g>

<use href="#mic" x="1833" y="92"/><use href="#camx" x="1863" y="92"/>
<use href="#mic" x="1833" y="143"/><use href="#camx" x="1863" y="143"/>
<use href="#micg" x="1833" y="194"/><use href="#cam" x="1863" y="194"/>
<use href="#mico" x="1833" y="245"/><use href="#cam" x="1863" y="245"/>
<use href="#mic" x="1833" y="296"/><use href="#cam" x="1863" y="296"/>
<use href="#mic" x="1833" y="347"/><use href="#cam" x="1863" y="347"/>
<use href="#mic" x="1833" y="398"/><use href="#camx" x="1863" y="398"/>
<use href="#mic" x="1833" y="449"/><use href="#cam" x="1863" y="449"/>
<use href="#mic" x="1833" y="500"/><use href="#cam" x="1863" y="500"/>
<use href="#mic" x="1833" y="551"/><use href="#cam" x="1863" y="551"/>
<use href="#mic" x="1833" y="602"/><use href="#cam" x="1863" y="602"/>
<use href="#mic" x="1833" y="653"/><use href="#cam" x="1863" y="653"/>
<use href="#mic" x="1833" y="704"/><use href="#cam" x="1863" y="704"/>
<use href="#mic" x="1863" y="755"/>
<use href="#mic" x="1833" y="806"/><use href="#camx" x="1863" y="806"/>
<use href="#mic" x="1833" y="857"/><use href="#camx" x="1863" y="857"/>
</g>
</svg>
</body></html>
